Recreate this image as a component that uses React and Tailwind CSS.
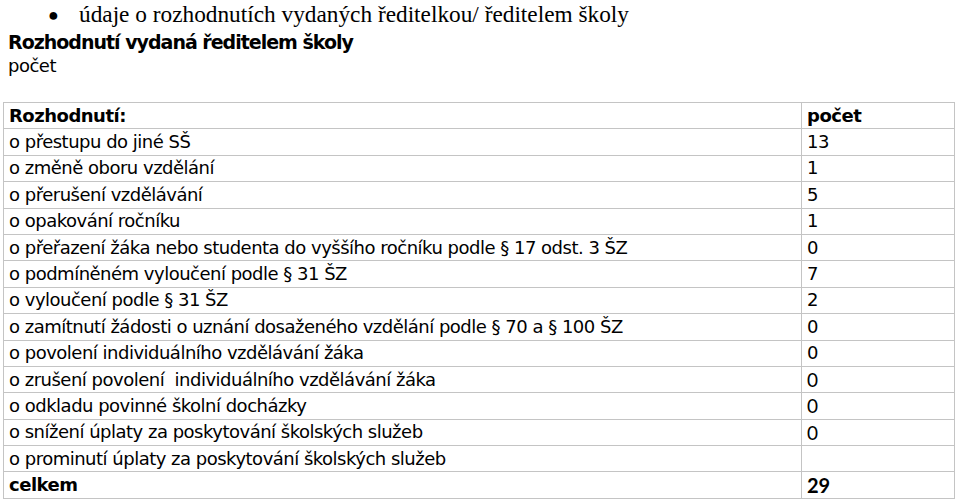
import React from 'react'

const rows = [
  ['o přestupu do jiné SŠ', '13'],
  ['o změně oboru vzdělání', '1'],
  ['o přerušení vzdělávání', '5'],
  ['o opakování ročníku', '1'],
  ['o přeřazení žáka nebo studenta do vyššího ročníku podle § 17 odst. 3 ŠZ', '0'],
  ['o podmíněném vyloučení podle § 31 ŠZ', '7'],
  ['o vyloučení podle § 31 ŠZ', '2'],
  ['o zamítnutí žádosti o uznání dosaženého vzdělání podle § 70 a § 100 ŠZ', '0'],
  ['o povolení individuálního vzdělávání žáka', '0'],
  ['o zrušení povolení  individuálního vzdělávání žáka', '0', true],
  ['o odkladu povinné školní docházky', '0', true],
  ['o snížení úplaty za poskytování školských služeb', '0', true],
  ['o prominutí úplaty za poskytování školských služeb', ''],
]

const sans = { fontFamily: '"DejaVu Sans", Verdana, sans-serif' }

export default function App() {
  return (
    <div className="bg-white w-[960px] h-[501px] overflow-hidden text-black">
      {/* bullet line */}
      <div
        className="flex items-center h-[29px] pl-[48px] text-[23.3px] leading-none"
        style={{ fontFamily: '"Liberation Serif", "Times New Roman", serif' }}
      >
        <span className="w-[31px] text-[18px]">●</span>
        <span>údaje o rozhodnutích vydaných ředitelkou/ ředitelem školy</span>
      </div>

      <div style={sans} className="pl-[8px]">
        <div className="h-[26px] font-bold text-[19px] leading-[26px] tracking-[-1px]">
          Rozhodnutí vydaná ředitelem školy
        </div>
        <div className="h-[26px] text-[18px] leading-[22px] tracking-[-0.5px]">počet</div>
      </div>

      <table
        style={sans}
        className="ml-[3px] mt-[21px] w-[952px] border-collapse text-[18px] tracking-[-0.5px] leading-none"
      >
        <tbody>
          <tr className="h-[26.4px]">
            <td className="border border-[#c4c4c4] pl-[5px] font-bold w-[798px]">Rozhodnutí:</td>
            <td className="border border-[#c4c4c4] pl-[5px] font-bold">počet</td>
          </tr>
          {rows.map(([label, n, cal]) => (
            <tr key={label} className="h-[26.4px]">
              <td className="border border-[#c4c4c4] pl-[5px] whitespace-pre">{label}</td>
              <td
                className="border border-[#c4c4c4] pl-[5px]"
                style={cal ? { fontFamily: 'Lato, sans-serif', fontSize: '19px', letterSpacing: 0 } : undefined}
              >
                {n}
              </td>
            </tr>
          ))}
          <tr className="h-[26.4px]">
            <td className="border border-[#c4c4c4] pl-[5px] font-bold">celkem</td>
            <td
              className="border border-[#c4c4c4] pl-[5px] font-bold text-[20px] tracking-normal"
              style={{ fontFamily: 'Lato, sans-serif' }}
            >
              29
            </td>
          </tr>
        </tbody>
      </table>
    </div>
  )
}
